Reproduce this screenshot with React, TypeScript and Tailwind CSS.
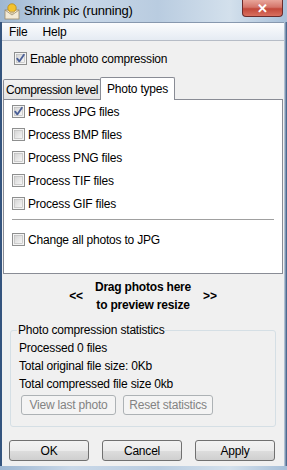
import React from 'react';

const FONT = { fontFamily: '"Liberation Sans", Arial, sans-serif', letterSpacing: '-0.2px' };

function Box({ checked = false }: { checked?: boolean }) {
  return (
    <svg width="13" height="13" viewBox="0 0 13 13" className="shrink-0">
      <defs>
        <linearGradient id="cbg" x1="0" y1="0" x2="1" y2="1">
          <stop offset="0%" stopColor="#d4d4d4" />
          <stop offset="100%" stopColor="#f7f7f7" />
        </linearGradient>
      </defs>
      <rect x="0.5" y="0.5" width="12" height="12" fill="#f4f4f4" stroke="#8e8f8f" />
      <rect x="2.5" y="2.5" width="8" height="8" fill="url(#cbg)" stroke="#b5b5b5" strokeWidth="0.6" />
      {checked && (
        <path d="M3.2 6.6 L5.3 9.4 L9.9 2.8" fill="none" stroke="#4a5f97" strokeWidth="1.8" strokeLinecap="round" strokeLinejoin="round" />
      )}
    </svg>
  );
}

function Check({ label, checked }: { label: string; checked?: boolean }) {
  return (
    <div className="flex items-center h-[13px] gap-[3px]">
      <Box checked={checked} />
      <span className="text-[12px] leading-none text-black whitespace-nowrap">{label}</span>
    </div>
  );
}

function Btn({ label, disabled, w }: { label: string; disabled?: boolean; w: string }) {
  return disabled ? (
    <div className={`${w} h-[20px] flex items-center justify-center rounded-[3px] border border-[#adb2b5] bg-[#f4f4f4] text-[12px] text-[#838383]`}>
      {label}
    </div>
  ) : (
    <div className={`${w} h-[21px] flex items-center justify-center rounded-[3px] border border-[#707070] bg-[linear-gradient(#f2f2f2_0%,#ebebeb_50%,#dddddd_51%,#cfcfcf_100%)] text-[12px] text-black`}>
      {label}
    </div>
  );
}

export default function App() {
  return (
    <div
      className="w-[287px] h-[470px] flex flex-col bg-[linear-gradient(90deg,#9eb7d2_0%,#c9d8e8_25%,#b9cce0_55%,#d3e0ec_80%,#a7bfd8_100%)] overflow-hidden"
      style={FONT}
    >
      {/* title bar */}
      <div className="h-[22px] flex items-start relative">
        <svg width="18" height="18" viewBox="0 0 18 18" className="ml-[3px] mt-[2px]">
          <rect x="2" y="8" width="14" height="9" fill="#f3ead6" stroke="#9b8a6a" strokeWidth="0.8" />
          <path d="M2 8 L9 13 L16 8" fill="none" stroke="#9b8a6a" strokeWidth="0.8" />
          <circle cx="9" cy="6" r="4.2" fill="#f3c22e" stroke="#b98a12" strokeWidth="0.8" />
          <rect x="7" y="9.5" width="4" height="2" fill="#c7b48a" />
        </svg>
        <span className="ml-[3px] mt-[3px] text-[13px] leading-[16px] text-black">Shrink pic (running)</span>
        <div className="absolute right-[4px] top-0 w-[41px] h-[17px] rounded-b-[4px] border border-t-0 border-[#6b2b2b] bg-[linear-gradient(#e8a59a_0%,#d4756a_45%,#c2483a_55%,#d9705f_100%)] flex items-center justify-center">
          <span className="text-white text-[13px] font-bold leading-none">✕</span>
        </div>
      </div>

      {/* client area */}
      <div className="flex-1 flex mb-[4px]">
        <div className="w-[2px] bg-[#34547e]" />
        <div className="w-[282px] flex flex-col bg-[#f0f0f0] border-t border-[#8798ae]">
          {/* menu */}
          <div className="h-[18px] flex items-center gap-[15px] pl-[7px] text-[12px] text-black bg-[linear-gradient(#fbfcfd,#e5ebf3)] border-b border-[#b6bcc6]">
            <span>File</span>
            <span>Help</span>
          </div>

          <div className="h-[33px] flex items-center pl-[12px] pt-[2px]">
            <Check label="Enable photo compression" checked />
          </div>

          {/* tabs */}
          <div className="pl-[1px] pr-[1px]">
            <div className="flex items-end h-[25px]">
              <div className="w-[98px] h-[20px] flex items-center justify-center border border-b-0 border-[#898c95] bg-[linear-gradient(#f3f3f3,#e3e3e3)] text-[12px] text-black rounded-t-[2px] whitespace-nowrap tracking-[-0.4px]">
                Compression level
              </div>
              <div className="w-[75px] h-[23px] -ml-[1px] flex items-center justify-center border border-b-0 border-[#898c95] bg-white text-[12px] text-black relative z-10 -mb-[1px] pb-[1px] rounded-t-[2px] whitespace-nowrap">
                Photo types
              </div>
            </div>
            <div className="h-[175px] bg-white border border-[#898c95] flex flex-col pl-[8px] pt-[5px]">
              <div className="flex flex-col gap-[10px]">
                <Check label="Process JPG files" checked />
                <Check label="Process BMP files" />
                <Check label="Process PNG files" />
                <Check label="Process TIF files" />
                <Check label="Process GIF files" />
              </div>
              <div className="mt-[9px] mr-[8px] h-[2px] border-t border-[#a0a0a0] border-b border-b-white" />
              <div className="mt-[12px]">
                <Check label="Change all photos to JPG" />
              </div>
            </div>
          </div>

          {/* drag area */}
          <div className="h-[50px] flex items-center justify-center gap-[12px] font-bold text-[12px] text-black pb-[6px]">
            <span>&lt;&lt;</span>
            <div className="flex flex-col items-center leading-[18px]">
              <span>Drag photos here</span>
              <span>to preview resize</span>
            </div>
            <span>&gt;&gt;</span>
          </div>

          {/* stats group */}
          <div className="mx-[8px] mt-[6px] h-[97px] relative border border-[#d5dfe5] rounded-[3px] pl-[8px] pt-[10px] flex flex-col">
            <span className="absolute -top-[8px] left-[6px] px-[1px] bg-[#f0f0f0] text-[12px] leading-[15px] text-black">
              Photo compression statistics
            </span>
            <div className="flex flex-col gap-[3px] text-[12px] leading-[15px] text-black">
              <span>Processed 0 files</span>
              <span>Total original file size: 0Kb</span>
              <span>Total compressed file size 0kb</span>
            </div>
            <div className="flex gap-[7px] mt-[3px] ml-[2px]">
              <Btn label="View last photo" disabled w="w-[95px]" />
              <Btn label="Reset statistics" disabled w="w-[90px]" />
            </div>
          </div>

          {/* buttons */}
          <div className="flex gap-[13px] pl-[7px] mt-[13px]">
            <Btn label="OK" w="w-[80px]" />
            <Btn label="Cancel" w="w-[80px]" />
            <Btn label="Apply" w="w-[80px]" />
          </div>
        </div>
        <div className="w-[3px] bg-[linear-gradient(90deg,#c9d6e4,#34547e)]" />
      </div>
    </div>
  );
}
